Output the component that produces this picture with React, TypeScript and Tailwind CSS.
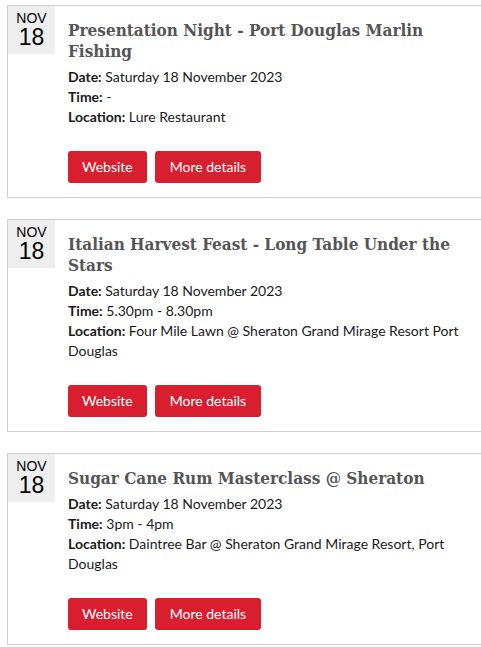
const events = [
  {
    title: "Presentation Night - Port Douglas Marlin Fishing",
    date: "Saturday 18 November 2023",
    time: "-",
    location: "Lure Restaurant",
  },
  {
    title: "Italian Harvest Feast - Long Table Under the Stars",
    date: "Saturday 18 November 2023",
    time: "5.30pm - 8.30pm",
    location: "Four Mile Lawn @ Sheraton Grand Mirage Resort Port Douglas",
  },
  {
    title: "Sugar Cane Rum Masterclass @ Sheraton",
    date: "Saturday 18 November 2023",
    time: "3pm - 4pm",
    location: "Daintree Bar @ Sheraton Grand Mirage Resort, Port Douglas",
  },
]

function EventCard({ ev }: { ev: (typeof events)[number] }) {
  return (
    <div className="flex w-[500px] border border-[#cfcfcf] mb-[21px]">
      <div className="flex flex-col items-center w-[47px] h-[48px] bg-[#eeeeee] shrink-0 pt-[4px] font-['Liberation_Sans',Arial,sans-serif] text-black">
        <span className="text-[14px] leading-[16px]">NOV</span>
        <span className="text-[23px] leading-[22px]">18</span>
      </div>
      <div className="w-[400px] ml-[13px] pt-[14px] pb-[14px] font-['Lato',sans-serif] text-[14px] leading-[20px] text-[#1a1a1a]">
        <h2 className="font-['DejaVu_Serif_Condensed','DejaVu_Serif',serif] font-stretch-condensed font-bold text-[17px] leading-[21px] text-[#555555] mb-[5px]">
          {ev.title}
        </h2>
        <p>
          <b>Date:</b> {ev.date}
        </p>
        <p>
          <b>Time:</b> {ev.time}
        </p>
        <p>
          <b>Location:</b> {ev.location}
        </p>
        <div className="flex gap-2 mt-6">
          <a className="h-[32px] px-[14px] flex items-center bg-[#d71f30] text-white rounded-[3px]">Website</a>
          <a className="h-[32px] px-[15px] flex items-center bg-[#d71f30] text-white rounded-[3px]">More details</a>
        </div>
      </div>
    </div>
  )
}

export default function App() {
  return (
    <div className="w-[481px] h-[647px] overflow-hidden bg-white pl-[7px] pt-[5px]">
      {events.map((ev) => (
        <EventCard key={ev.title} ev={ev} />
      ))}
    </div>
  )
}
